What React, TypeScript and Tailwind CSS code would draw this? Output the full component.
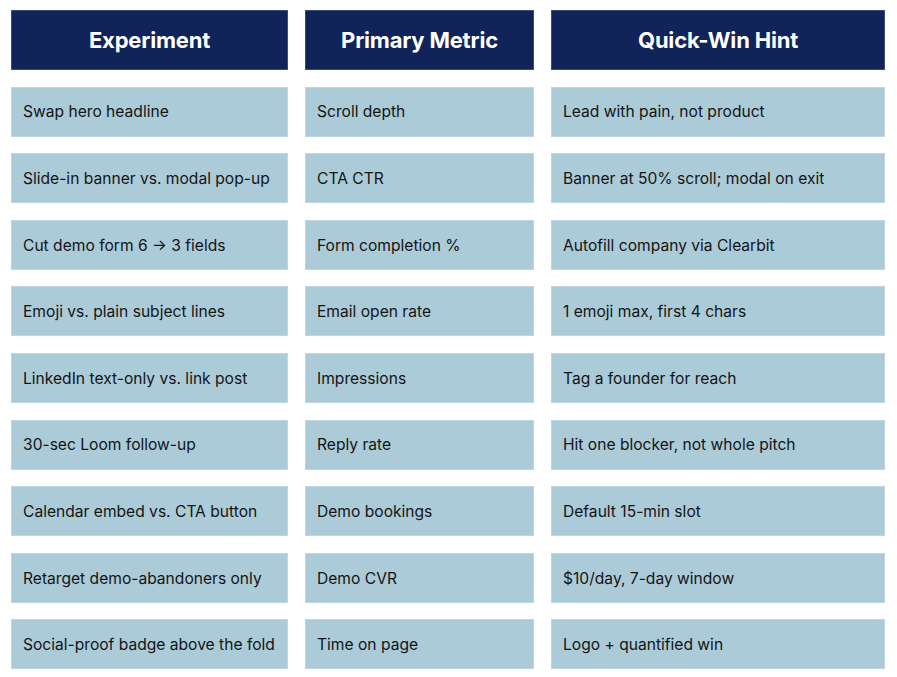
import React from "react";

const headers = ["Experiment", "Primary Metric", "Quick-Win Hint"];
const rows: string[][] = [
  ["Swap hero headline", "Scroll depth", "Lead with pain, not product"],
  ["Slide-in banner vs. modal pop-up", "CTA CTR", "Banner at 50% scroll; modal on exit"],
  ["Cut demo form 6 → 3 fields", "Form completion %", "Autofill company via Clearbit"],
  ["Emoji vs. plain subject lines", "Email open rate", "1 emoji max, first 4 chars"],
  ["LinkedIn text-only vs. link post", "Impressions", "Tag a founder for reach"],
  ["30-sec Loom follow-up", "Reply rate", "Hit one blocker, not whole pitch"],
  ["Calendar embed vs. CTA button", "Demo bookings", "Default 15-min slot"],
  ["Retarget demo-abandoners only", "Demo CVR", "$10/day, 7-day window"],
  ["Social-proof badge above the fold", "Time on page", "Logo + quantified win"],
];

export default function App() {
  return (
    <div
      className="w-[897px] h-[677px] bg-white pt-[10px] pl-[11px]"
      style={{ fontFamily: "Inter, 'Noto Sans', sans-serif" }}
    >
      <div className="grid grid-cols-[277px_229px_334px] gap-x-[17px] gap-y-[16.6px] grid-rows-[60px_repeat(9,50px)]">
        {headers.map((h) => (
          <div
            key={h}
            className="bg-[#10245a] border border-[#3b4d7a] flex items-center justify-center text-white font-bold text-[22px] tracking-[-0.2px]"
          >
            {h}
          </div>
        ))}
        {rows.map((r, i) =>
          r.map((c, j) => (
            <div
              key={`${i}-${j}`}
              className="bg-[#abcbd9] border border-[#bdd6e1] flex items-center pl-[11px] pt-[1px] text-[15.6px] text-[#141414]"
            >
              {c}
            </div>
          ))
        )}
      </div>
    </div>
  );
}
